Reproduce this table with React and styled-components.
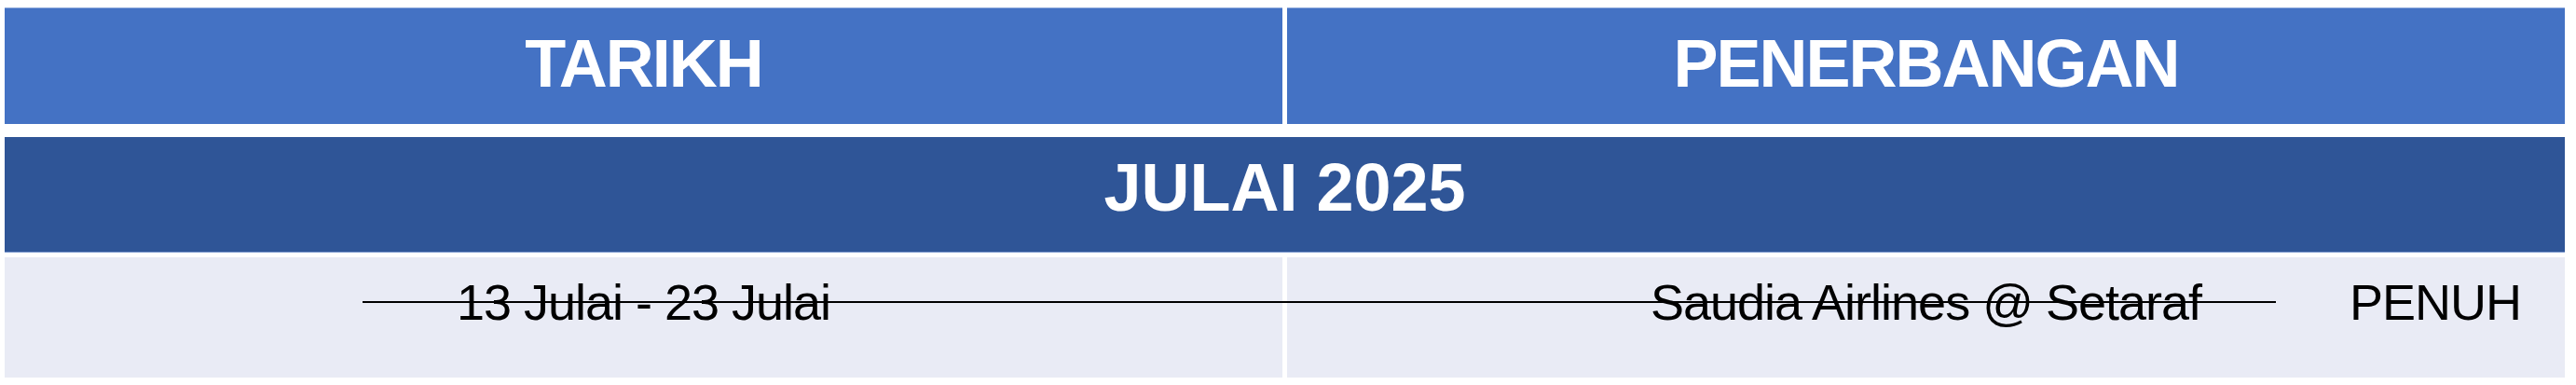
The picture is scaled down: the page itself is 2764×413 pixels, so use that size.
import React from "react";
import styled, { createGlobalStyle } from "styled-components";

const GlobalStyle = createGlobalStyle`
  body {
    margin: 0;
    background: #ffffff;
    font-family: "Liberation Sans", Arial, Helvetica, sans-serif;
  }
`;

const Table = styled.div`
  width: 2747px;
  padding: 8px 0 0 5px;
`;

const HeaderRow = styled.div`
  display: grid;
  grid-template-columns: 1fr 1fr;
  column-gap: 5px;
  margin-bottom: 14px;
`;

const HeaderCell = styled.div`
  height: 125px;
  box-sizing: border-box;
  padding-top: 18px;
  background: #4472c4;
  border-top: 1px solid #8eaadc;
  color: #ffffff;
  font-size: 72px;
  line-height: 83px;
  font-weight: 700;
  letter-spacing: ${({ $spacing }) => $spacing || "-2px"};
  text-align: center;
`;

const MonthBand = styled.div`
  height: 124px;
  box-sizing: border-box;
  padding-top: 13px;
  margin-bottom: 5px;
  background: #2f5597;
  border-bottom: 1px solid #7f9bd0;
  color: #ffffff;
  font-size: 72px;
  line-height: 83px;
  font-weight: 700;
  text-align: center;
`;

const DataRow = styled.div`
  position: relative;
  display: grid;
  grid-template-columns: 1fr 1fr;
  column-gap: 5px;
`;

const DataCell = styled.div`
  height: 129px;
  box-sizing: border-box;
  padding-top: 17px;
  background: #e9ebf5;
  color: #000000;
  font-size: 54px;
  line-height: 62px;
  letter-spacing: -1px;
  text-align: center;
`;

// garis potong untuk tarikh yang dah penuh
const StrikeLine = styled.div`
  position: absolute;
  top: 47px;
  left: ${({ $left }) => $left}px;
  right: ${({ $right }) => $right}px;
  height: 2px;
  background: #000000;
`;

const Status = styled.span`
  position: absolute;
  top: 17px;
  right: 47px;
  font-size: 54px;
  line-height: 62px;
  letter-spacing: -1px;
  color: #000000;
`;

const trips = [
  {
    date: "13 Julai - 23 Julai",
    flight: "Saudia Airlines @ Setaraf",
    status: "PENUH",
  },
];

const App = () => {
  return (
    <>
      <GlobalStyle />
      <Table>
        <HeaderRow>
          <HeaderCell>TARIKH</HeaderCell>
          <HeaderCell>PENERBANGAN</HeaderCell>
        </HeaderRow>
        <MonthBand>JULAI 2025</MonthBand>
        {trips.map((trip) => (
          <DataRow key={trip.date}>
            <DataCell>{trip.date}</DataCell>
            <DataCell>{trip.flight}</DataCell>
            {trip.status === "PENUH" && <StrikeLine $left={384} $right={310} />}
            <Status>{trip.status}</Status>
          </DataRow>
        ))}
      </Table>
    </>
  );
};

export default App;
